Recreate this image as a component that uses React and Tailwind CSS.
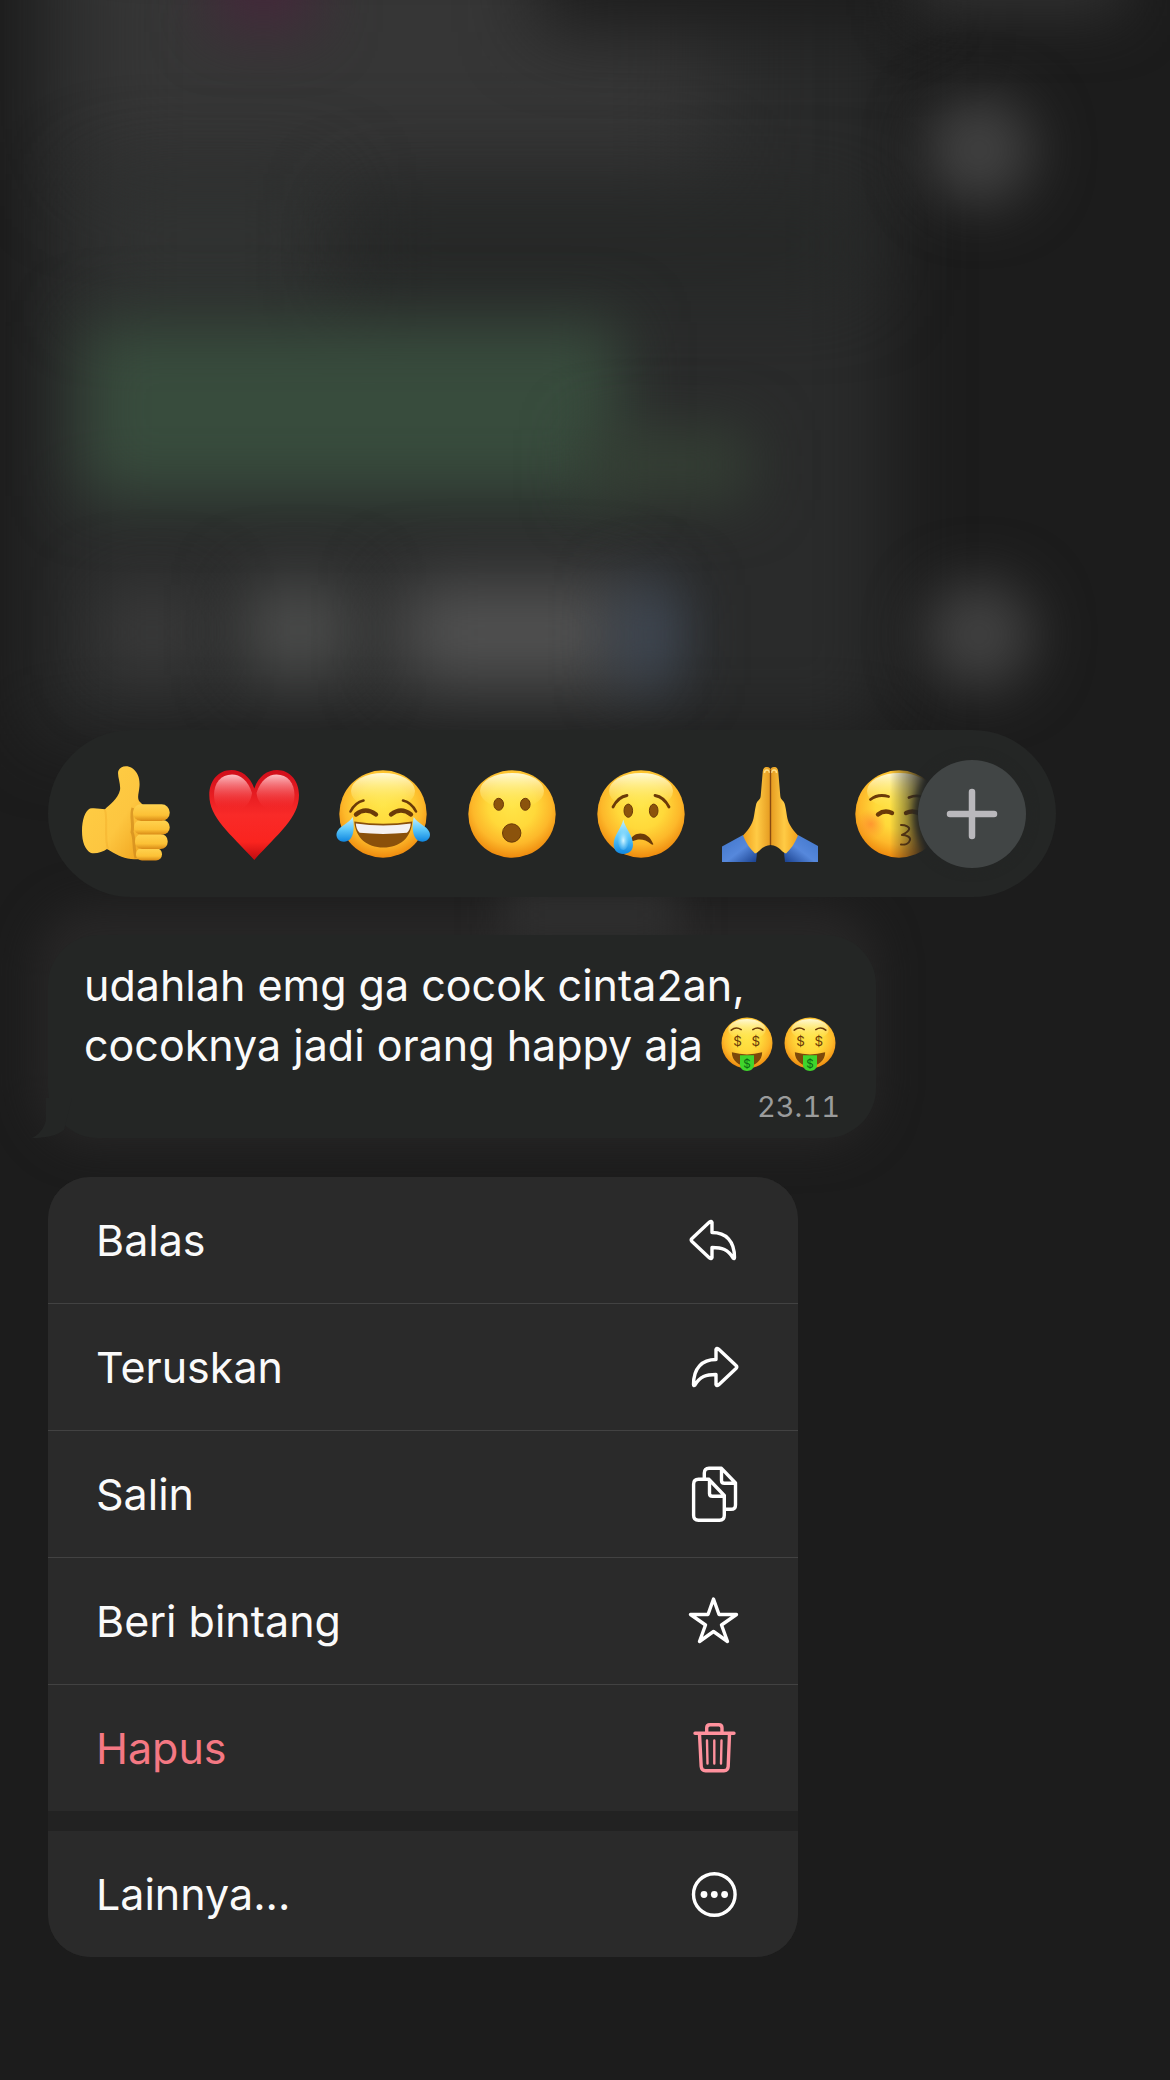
import { useState } from 'react';

const BROWN = '#6b3a08';

/* Gradients shared by every emoji */
const EmojiDefs = () => (
  <svg className="absolute size-0" aria-hidden="true">
    <defs>
      <radialGradient id="face" cx="0.5" cy="0.4" r="0.6">
        <stop offset="0" stopColor="#ffe548" />
        <stop offset="0.45" stopColor="#ffd93a" />
        <stop offset="0.75" stopColor="#fdb82a" />
        <stop offset="1" stopColor="#ee8a0e" />
      </radialGradient>
      <linearGradient id="shine" x1="0" y1="0" x2="0" y2="1">
        <stop offset="0" stopColor="#fffde0" stopOpacity="0.95" />
        <stop offset="1" stopColor="#ffee60" stopOpacity="0" />
      </linearGradient>
      <linearGradient id="heart" x1="0" y1="0" x2="0" y2="1">
        <stop offset="0" stopColor="#d00d1a" />
        <stop offset="0.5" stopColor="#f92a28" />
        <stop offset="0.8" stopColor="#fa241f" />
        <stop offset="1" stopColor="#c00b10" />
      </linearGradient>
      <linearGradient id="heartShine" x1="0" y1="0" x2="0" y2="1">
        <stop offset="0" stopColor="#ffc9ce" stopOpacity="0.95" />
        <stop offset="0.4" stopColor="#fb7a7e" stopOpacity="0.6" />
        <stop offset="0.9" stopColor="#fb2c2a" stopOpacity="0" />
      </linearGradient>
      <linearGradient id="skin" x1="0" y1="0" x2="1" y2="1">
        <stop offset="0" stopColor="#ffcf45" />
        <stop offset="0.6" stopColor="#fdc640" />
        <stop offset="1" stopColor="#efa21c" />
      </linearGradient>
      <linearGradient id="finger" x1="0" y1="0" x2="0" y2="1">
        <stop offset="0" stopColor="#ffd350" />
        <stop offset="0.65" stopColor="#fcc136" />
        <stop offset="1" stopColor="#d98a16" />
      </linearGradient>
      <linearGradient id="palm" x1="0" y1="0" x2="1" y2="0">
        <stop offset="0" stopColor="#f0a01c" />
        <stop offset="0.5" stopColor="#ffcb45" />
        <stop offset="1" stopColor="#e59a20" />
      </linearGradient>
      <linearGradient id="sleeve" x1="0" y1="0" x2="1" y2="1">
        <stop offset="0" stopColor="#3f74c8" />
        <stop offset="0.55" stopColor="#5688dc" />
        <stop offset="1" stopColor="#183f8c" />
      </linearGradient>
      <linearGradient id="tear" x1="0" y1="0" x2="0" y2="1">
        <stop offset="0" stopColor="#c4f1ff" />
        <stop offset="0.5" stopColor="#5cc8fa" />
        <stop offset="1" stopColor="#0f86e0" />
      </linearGradient>
      <radialGradient id="tearGlow" cx="0.5" cy="0.6" r="0.5">
        <stop offset="0" stopColor="#d6f6ff" />
        <stop offset="1" stopColor="#7fd8ff" stopOpacity="0" />
      </radialGradient>
      <radialGradient id="blush">
        <stop offset="0" stopColor="#ff7a2e" stopOpacity="0.6" />
        <stop offset="1" stopColor="#ff8a2e" stopOpacity="0" />
      </radialGradient>
    </defs>
  </svg>
);

const Face = () => (
  <>
    <circle cx="48" cy="48" r="43.7" fill="url(#face)" />
    <ellipse cx="48" cy="25" rx="32" ry="18" fill="url(#shine)" />
  </>
);

const Emoji = ({ children, className = 'size-24' }) => (
  <svg viewBox="0 0 96 96" className={className} aria-hidden="true">
    {children}
  </svg>
);

const ThumbsUp = () => (
  <Emoji>
    <path
      d="M41.3 5C43 0 50 -1 55 2C61 6 63 13 62.500 20C62 27 60 31 62 35L66 39L68 90C66 94 60 93.500 54 93C45 92 38 88 30 83C26 86 19 88 14 87C8 84 5 76 5 65C5 54 8 45 13 42.500C18 41.500 24 43 28 43.300C32 39 41 33 43 24C44 18 40 10 41.300 5Z"
      fill="url(#skin)"
    />
    <path d="M28 44C31 52 27 74 31 83" fill="none" stroke="#f3b02b" strokeWidth="2" opacity="0.5" />
    <path d="M56 42C53 50 57 58 55 66C58 72 56 82 59 92" fill="none" stroke="#d08a1c" strokeWidth="3" opacity="0.7" />
    <rect x="59" y="82" width="26" height="12.500" rx="6" fill="url(#finger)" />
    <rect x="58" y="68" width="32.700" height="15" rx="7" fill="url(#finger)" />
    <rect x="57" y="54" width="35.700" height="14.600" rx="7" fill="url(#finger)" />
    <rect x="56" y="38.300" width="36.700" height="16.600" rx="8" fill="url(#finger)" />
  </Emoji>
);

const Heart = () => (
  <Emoji>
    <path
      d="M48.300 22.500C44 10 35 4 25.500 4C12 4 3.300 15 3.300 29C3.300 52 24 67 48.300 94C72.500 67 93 52 93 29C93 15 84 4 71 4C61.500 4 52.500 10 48.300 22.500Z"
      fill="url(#heart)"
    />
    <path d="M46 27C42 14 34 8.500 26 8.500C15 8.500 8 17 8 29C8 38 12 44 20 48C32 46 44 42 46 27Z" fill="url(#heartShine)" />
    <path d="M50.500 27C54.500 14 62.500 8.500 70.500 8.500C81.500 8.500 88.500 17 88.500 29C88.500 38 84.500 44 76.500 48C64.500 46 52.500 42 50.500 27Z" fill="url(#heartShine)" />
  </Emoji>
);

const Joy = () => (
  <Emoji>
    <Face />
    <g fill="none" stroke={BROWN} strokeLinecap="round">
      <path d="M15.500 45.500Q20 36.500 28.500 34.500M81 45.500Q76.500 36.500 68 34.500" strokeWidth="2.600" />
      <path d="M21 48.500Q30.500 40.500 41 48.500M56 48.500Q66 40.500 76 48.500" strokeWidth="4.400" />
    </g>
    <path d="M19.300 55.500Q48 60 77.300 55.500C76 72 65 81.500 48.300 81.500C32 81.500 20.500 72 19.300 55.500Z" fill="#8a500a" />
    <path d="M20.800 57.500Q48 61.500 75.800 57.500C75.500 62 74 65 72 66.800Q48 69 24.600 66.800C22 64 21 61 20.800 57.500Z" fill="#f4f1f2" />
    <path d="M17.700 51C20 62 19 75.700 9 75.700C3.500 75.700 0 71 2 66C4.500 60 13 58 17.700 51Z" fill="url(#tear)" />
    <path d="M78.700 51C76.400 62 77.400 75.700 87.400 75.700C92.900 75.700 96.400 71 94.400 66C91.900 60 83.400 58 78.700 51Z" fill="url(#tear)" />
  </Emoji>
);

const Wow = () => (
  <Emoji>
    <Face />
    <g fill="#8b530c" stroke={BROWN}>
      <ellipse cx="34.700" cy="38.300" rx="4.800" ry="6" />
      <ellipse cx="61.300" cy="38.300" rx="4.800" ry="6" />
      <circle cx="47.700" cy="67" r="9.200" />
    </g>
  </Emoji>
);

const Cry = () => (
  <Emoji>
    <Face />
    <path d="M20 41Q25 31 34 29.500M76 41Q71 31 62 29.500" fill="none" stroke={BROWN} strokeWidth="2.800" strokeLinecap="round" />
    <g fill="#8b530c" stroke={BROWN}>
      <ellipse cx="35.300" cy="44.700" rx="4.300" ry="6.600" />
      <ellipse cx="60.700" cy="44.700" rx="4.300" ry="6.600" />
    </g>
    <path d="M37 75C40 65 55 64 60 77.500C61 79 59 79 58 78C52 72.500 45 72.500 40 75Z" fill={BROWN} />
    <path d="M30.300 53.500C32 62 40 69 40 78.500C40 84.500 36 88 30.300 88C24.600 88 20.700 84.500 20.700 78.500C20.700 69 28.500 62 30.300 53.500Z" fill="url(#tear)" />
    <ellipse cx="30.300" cy="72" rx="6" ry="12" fill="url(#tearGlow)" />
  </Emoji>
);

const PrayHalf = () => (
  <>
    <path d="M0 80.500L21 69L35 87L34 96H0Z" fill="url(#sleeve)" />
    <path
      d="M45 1C42 1 41 3 40.700 6L38.700 30C38.500 34 35 34 34 39C32 47 32.500 53 29 59C27 63 24 66 21 69.500C24 77 28 83 33 87.500C38 86 39 80 48.600 79V5C48.600 2 47.500 1 45 1Z"
      fill="url(#palm)"
    />
    <path d="M42.500 7C42.500 3 47.500 3 47.500 7" fill="none" stroke="#ffe08a" strokeWidth="1.500" />
  </>
);

const Pray = () => (
  <Emoji>
    <PrayHalf />
    <g transform="translate(97 0) scale(-1 1)">
      <PrayHalf />
    </g>
    <path d="M48.500 4V79" stroke="#8a4a10" strokeWidth="1.400" />
  </Emoji>
);

const Kiss = () => (
  <Emoji>
    <Face />
    <circle cx="20" cy="58" r="15" fill="url(#blush)" />
    <g fill="none" stroke={BROWN} strokeLinecap="round" strokeLinejoin="round">
      <path d="M19.500 33.500Q27 27.500 37.500 30.500M58 31.500Q68 27.500 77 33.500" strokeWidth="2.800" />
      <path d="M27 48.500Q33.500 43.500 41 47M55 47Q63 43.500 70 48.500" strokeWidth="4.400" />
      <path d="M50 59C55 59 59 61 58 63.500C57 66 54 67.500 51 69C55 69 60 71 59 74C58 77.500 54 79 50 78.500" strokeWidth="2" />
    </g>
  </Emoji>
);

const MoneyFace = () => (
  <Emoji className="size-14 -mt-1">
    <Face />
    <path d="M21 26Q29 19 38 25M58 25Q67 19 75 26" fill="none" stroke={BROWN} strokeWidth="2.800" strokeLinecap="round" />
    <path d="M22 64Q48 71 74 64C74 78 62 88 48 88C34 88 22 78 22 64Z" fill="#7c480a" />
    <path d="M36 69H60V85C60 92 55 96 48 96C41 96 36 92 36 85Z" fill="#3fd52c" />
    <g fontFamily="Inter, sans-serif" fontSize="23" textAnchor="middle">
      <text x="32" y="53" fill={BROWN}>$</text>
      <text x="63" y="53" fill={BROWN}>$</text>
      <text x="48" y="90" fontSize="20" fill="#0c6a14">$</text>
    </g>
  </Emoji>
);

const REACTIONS = [
  { label: 'Suka', Icon: ThumbsUp },
  { label: 'Cinta', Icon: Heart },
  { label: 'Tertawa', Icon: Joy },
  { label: 'Kaget', Icon: Wow },
  { label: 'Sedih', Icon: Cry },
  { label: 'Terima kasih', Icon: Pray },
  { label: 'Cium', Icon: Kiss },
];

const ARROW =
  'M29 12.500V22.500C43 22.500 51.500 31 51.500 47.500Q51.500 49.500 50 48C45 39.500 39 37.500 29 37.500V47.500Q28.500 49.500 26.500 48L9 31.500Q7.500 30 9 28.500L26.500 12Q28.500 10.500 29 12.500Z';

const ITEMS = [
  { label: 'Balas', icon: <path d={ARROW} /> },
  { label: 'Teruskan', icon: <path d={ARROW} transform="translate(62 0) scale(-1 1)" /> },
  {
    label: 'Salin',
    icon: (
      <>
        <path d="M26 15.300H15.500Q10.600 15.300 10.600 20.300V51.300Q10.600 56.300 15.500 56.300H36.500Q41.300 56.300 41.300 51.300V31.500L27 16.500ZM26.500 16V29.500Q26.500 32.300 29.500 32.300H41" />
        <path d="M21.300 15V9Q21.300 4.300 26 4.300H38.500L52.500 19V41Q52.500 45.300 48 45.300H42M38.500 5V16.500Q38.500 19.300 41.500 19.300H52" />
      </>
    ),
  },
  {
    label: 'Beri bintang',
    icon: <path d="M30.500 8L36 23.500H53.500L38.500 34L44.500 50.500L30.500 40.500L16.500 50.500L22.500 34L7.500 23.500H25Z" />,
  },
  {
    label: 'Hapus',
    danger: true,
    icon: (
      <>
        <path d="M12 15.300H51M23.700 15V10Q23.700 6.700 27 6.700H35.800Q39 6.700 39 10V15M16.500 16L18.200 48.500Q18.500 52.700 22.500 52.700H41Q45 52.700 45.200 48.500L46.500 16" />
        <path d="M24 22.500L24.500 45.500M31.300 22.500V45.500M38.500 22.500L38 45.500" strokeWidth="2.400" />
      </>
    ),
  },
];

const MORE = {
  label: 'Lainnya...',
  icon: (
    <>
      <circle cx="31.300" cy="30.500" r="20.800" />
      <g fill="currentColor" stroke="none">
        <circle cx="21" cy="30.500" r="3.400" />
        <circle cx="31.300" cy="30.500" r="3.400" />
        <circle cx="41.600" cy="30.500" r="3.400" />
      </g>
    </>
  ),
};

const MenuItem = ({ item }) => (
  <button
    type="button"
    className={`flex w-full h-[126px] items-center justify-between bg-[#2a2a2a] pl-12 pr-[55px] text-left ${
      item.danger ? 'text-[#f47883]' : 'text-[#fafafa]'
    }`}
  >
    <span>{item.label}</span>
    <svg
      viewBox="0 0 60 60"
      className={`size-[60px] ${item.danger ? 'text-[#ff919d]' : 'text-white'}`}
      fill="none"
      stroke="currentColor"
      strokeWidth="3.400"
      strokeLinecap="round"
      strokeLinejoin="round"
      aria-hidden="true"
    >
      {item.icon}
    </svg>
  </button>
);

/* Blurred chat behind the menu */
const Backdrop = () => (
  <div className="absolute inset-0 -z-10 overflow-hidden bg-[#1c1c1c]" aria-hidden="true">
    <div className="absolute -top-24 left-[3%] h-[830px] w-[73%] bg-[#2a2b2b] blur-[38px]" />
    <div className="absolute -top-24 left-[7%] h-[270px] w-[54%] bg-[#363636] blur-[48px]" />
    <div className="absolute -top-24 left-[46%] h-32 w-[34%] bg-[#1d1d1d] blur-[36px]" />
    <div className="absolute -top-16 left-[18%] h-24 w-[9%] bg-[#43293a] blur-[28px]" />
    <div className="absolute top-[180px] left-[8%] h-[120px] w-[20%] bg-[#313332] blur-[40px]" />
    <div className="absolute top-[200px] left-[30%] h-[90px] w-[44%] bg-[#262827] blur-[40px]" />
    <div className="absolute top-[322px] left-[7%] h-[174px] w-[46%] bg-[#384c3d] blur-[32px]" />
    <div className="absolute top-[430px] left-[50%] h-[70px] w-[14%] bg-[#354035] blur-[30px]" />
    <div className="absolute top-[590px] left-[9%] h-[85px] w-[8%] bg-[#3c3c3c] blur-[34px]" />
    <div className="absolute top-[585px] left-[21%] h-[90px] w-[9%] bg-[#505150] blur-[34px]" />
    <div className="absolute top-[585px] left-[34%] h-[95px] w-[20%] bg-[#555555] blur-[36px]" />
    <div className="absolute top-[585px] left-[53%] h-[100px] w-[5%] bg-[#404a58] blur-[30px]" />
    <div className="absolute top-[95px] left-[79%] size-[110px] rounded-full bg-[#424242] blur-[28px]" />
    <div className="absolute top-[580px] left-[79%] size-[110px] rounded-full bg-[#424242] blur-[28px]" />
    <div className="absolute -top-16 left-[78%] h-20 w-[18%] bg-[#303030] blur-[28px]" />
    <div className="absolute top-[905px] left-[3%] h-[240px] w-[72%] rounded-[60px] bg-[#272626] blur-[20px]" />
    <div className="absolute top-[890px] left-[43%] h-[50px] w-[15%] bg-[#303030] blur-[20px]" />
  </div>
);

export default function App() {
  const [reaction, setReaction] = useState(null);

  return (
    <div className="relative isolate flex min-h-screen flex-col justify-end px-12 pb-[123px] font-['Inter',sans-serif] text-[43px] leading-[60px] text-[#fafafa]">
      <EmojiDefs />
      <Backdrop />

      {/* Reactions */}
      <div className="relative flex h-[167px] w-full max-w-[1008px] items-center rounded-full bg-[#242625] pl-[29px] pr-32">
        <div className="flex flex-1 gap-[33px] overflow-hidden [mask-image:linear-gradient(to_left,transparent_0px,black_38px)]">
          {REACTIONS.map(({ label, Icon }) => (
            <button
              key={label}
              type="button"
              aria-label={label}
              aria-pressed={reaction === label}
              onClick={() => setReaction(label)}
              className="shrink-0"
            >
              <Icon />
            </button>
          ))}
        </div>
        <button
          type="button"
          aria-label="Tambah"
          className="absolute right-[30px] flex size-[108px] items-center justify-center rounded-full bg-[#414545] shadow-[0_0_8px_4px_#242625]"
        >
          <svg viewBox="0 0 52 52" className="size-[52px]" stroke="#b9b8bc" strokeWidth="6.500" strokeLinecap="round" aria-hidden="true">
            <path d="M26 4V48M4 26H48" />
          </svg>
        </button>
      </div>

      {/* Message */}
      <div className="relative mt-[38px] w-full max-w-[828px] rounded-[50px] bg-[#242625] px-9 pt-5 pb-[11px]">
        <svg viewBox="0 0 40 40" className="absolute bottom-0 -left-4 size-10 text-[#242625]" fill="currentColor" aria-hidden="true">
          <path d="M14 0V22C12 30 8 36 0 40C14 40 24 38 32 32L40 0Z" />
        </svg>
        <p className="relative">
          udahlah emg ga cocok cinta2an, cocoknya jadi orang happy aja{' '}
          <span className="inline-flex h-[60px] items-center gap-[7px] pl-1 align-bottom">
            <MoneyFace />
            <MoneyFace />
          </span>
        </p>
        <p className="mt-3 text-right text-[29px] leading-10 tabular-nums text-[#9b9c9c]">23.11</p>
      </div>

      {/* Menu */}
      <div className="mt-[39px] w-full max-w-[750px] overflow-hidden rounded-[42px] bg-[#222222]">
        <ul className="divide-y divide-[#424242]">
          {ITEMS.map((item) => (
            <li key={item.label}>
              <MenuItem item={item} />
            </li>
          ))}
        </ul>
        <div className="mt-5">
          <MenuItem item={MORE} />
        </div>
      </div>
    </div>
  );
}
